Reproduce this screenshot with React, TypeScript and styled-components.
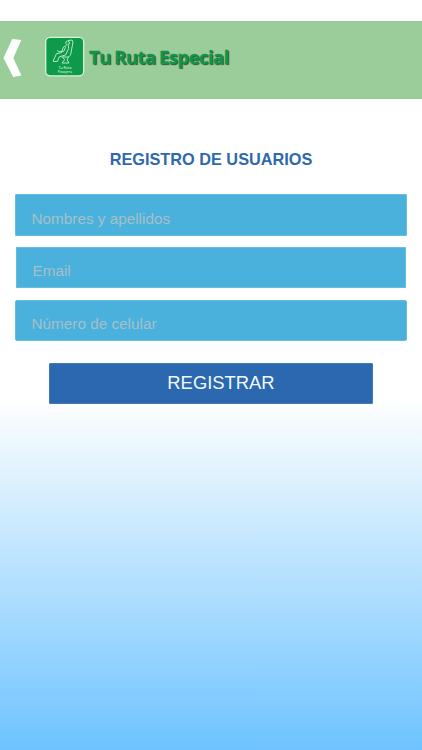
import React from "react";
import styled, { createGlobalStyle } from "styled-components";

const GlobalStyle = createGlobalStyle`
  * { box-sizing: border-box; }
  html, body { margin: 0; padding: 0; overflow: hidden; }
`;

const Screen = styled.main`
  width: 100%;
  height: 100vh;
  display: flex;
  flex-direction: column;
  padding-top: 21px;
  font-family: "Liberation Sans", Arial, sans-serif;
  background: linear-gradient(#fff 0, #fff 398px, #6ec3ff 750px);
`;

const Header = styled.header`
  flex: none;
  height: 78px;
  display: flex;
  align-items: flex-start;
  background: #9acd99;
`;

const BackButton = styled.button`
  width: 45px;
  height: 78px;
  padding: 0;
  border: 0;
  background: none;
  svg { display: block; }
`;

const Logo = styled.svg`
  flex: none;
  display: block;
  margin-top: 15px;
`;

const Brand = styled.div`
  margin: 23px 0 0 4px;
  font: 700 18.6px/26px "Open Sans", "Noto Sans", sans-serif;
  letter-spacing: -0.6px;
  word-spacing: -0.8px;
  white-space: nowrap;
  color: #14934a;
  -webkit-text-stroke: 0.3px #14934a;
  text-shadow: 1px 1px 1px #2d5037;
`;

const Form = styled.form`
  display: flex;
  flex-direction: column;
  align-items: center;
  padding: 0 15px;
`;

const Title = styled.h1`
  margin: 51px 0 25px;
  font-size: 16.3px;
  line-height: 19px;
  font-weight: 700;
  color: #2e69ae;
`;

const Field = styled.input<{ $inset?: boolean; $radius?: number }>`
  width: ${(p) => (p.$inset ? "390px" : "392px")};
  height: 41.6px;
  margin-bottom: 11.2px;
  padding: 7.5px 15.5px 0;
  border: 1px solid #65bde0;
  border-radius: ${(p) => p.$radius ?? 1}px;
  background: #4ab1dc;
  font: 15.3px "Liberation Sans", Arial, sans-serif;
  color: #fff;
  outline: 0;
  &::placeholder { color: #a6c0c9; opacity: 1; }
`;

const Submit = styled.button`
  width: 324px;
  height: 41px;
  margin-top: 10.6px;
  padding: 0 0 0 20px;
  border: 1px solid #4379b7;
  border-radius: 1px;
  background: #2c68af;
  color: #f4f9ff;
  font: 18.4px "Liberation Sans", Arial, sans-serif;
`;

export default function App() {
  return (
    <Screen>
      <GlobalStyle />
      <Header>
        <BackButton aria-label="Volver">
          <svg width="45" height="78" viewBox="0 0 45 78">
            <path d="M12.2 18L21.4 19L13.3 37L21.4 54.6L13.2 56L3.5 37Z" fill="#fff" />
          </svg>
        </BackButton>
        <Logo width="40" height="41" viewBox="0 0 40 41" role="img" aria-label="Tu Ruta Pasajero">
          <rect x="0.7" y="1.3" width="38" height="38.5" rx="4.5" fill="#0d9a4b" stroke="#d9f0da" strokeWidth="1.3" />
          <g fill="none" stroke="#b9e7c5" strokeWidth="1" strokeLinejoin="round" strokeLinecap="round">
            <path d="M23.5 4.5L27 4L28 6L25.7 18.4C25.4 20 24 21 22.5 21H17" />
            <ellipse cx="22.6" cy="7" rx="1.8" ry="2.1" />
            <path d="M21 9.8Q18.6 9.8 18 12L16.6 16.6L11.5 17.7L8.6 23.9L8.3 25.5H12.4L14.2 20.8L20.6 19L23.6 12.5L23.5 10" />
            <path d="M20.5 11.5L18.8 15.2L13.5 15.8L12.6 14.6" />
            <path d="M18 21.3L19.6 23.8L17 27H24L22.2 23.8L23.3 21.2" />
          </g>
          <g fill="#c2ebcb" fontFamily="Open Sans, Noto Sans, sans-serif" fontWeight="600" textAnchor="middle">
            <text x="20" y="32.6" fontSize="3.6" textLength="13" lengthAdjust="spacingAndGlyphs">Tu Ruta</text>
            <text x="20" y="37" fontSize="3.6" textLength="14.5" lengthAdjust="spacingAndGlyphs">Pasajero</text>
          </g>
        </Logo>
        <Brand>Tu Ruta Especial</Brand>
      </Header>
      <Form onSubmit={(e) => e.preventDefault()}>
        <Title>REGISTRO DE USUARIOS</Title>
        <Field placeholder="Nombres y apellidos" />
        <Field $inset $radius={0} type="email" placeholder="Email" />
        <Field $radius={2} type="tel" placeholder="Número de celular" />
        <Submit type="submit">REGISTRAR</Submit>
      </Form>
    </Screen>
  );
}
